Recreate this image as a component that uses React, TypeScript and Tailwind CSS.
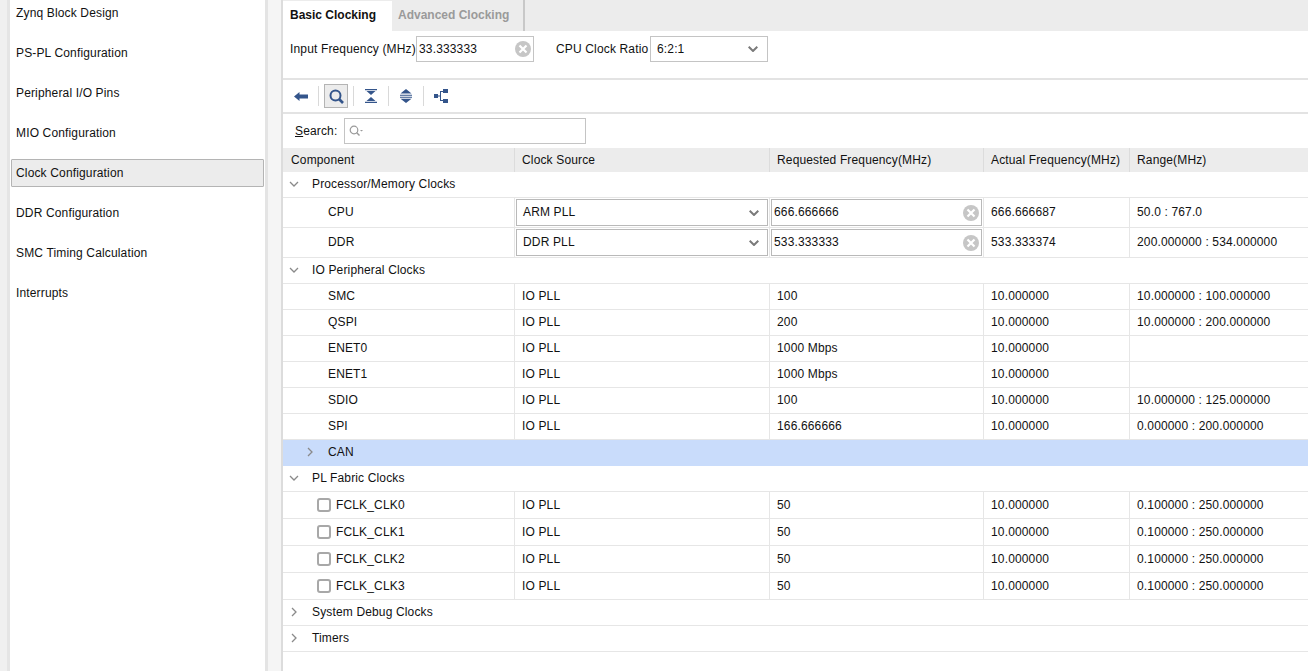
import React from "react";

const Chevron = ({ open }: { open: boolean }) => (
  <svg width="10" height="10" viewBox="0 0 10 10" className="shrink-0">
    {open ? (
      <path d="M1 3 L5 7 L9 3" fill="none" stroke="#8a8a8a" strokeWidth="1.3" />
    ) : (
      <path d="M3 1 L7 5 L3 9" fill="none" stroke="#8a8a8a" strokeWidth="1.3" />
    )}
  </svg>
);

const ClearIcon = () => (
  <svg width="16" height="16" viewBox="0 0 16 16" className="shrink-0">
    <circle cx="8" cy="8" r="8" fill="#c6c6c6" />
    <path d="M4.5 4.5 L11.5 11.5 M11.5 4.5 L4.5 11.5" stroke="#fff" strokeWidth="2.2" />
  </svg>
);

const DropArrow = () => (
  <svg width="10" height="6" viewBox="0 0 10 6" className="shrink-0">
    <path d="M0.7 0.7 L5 5 L9.3 0.7" fill="none" stroke="#7a7a7a" strokeWidth="2" />
  </svg>
);

const nav = [
  "Zynq Block Design",
  "PS-PL Configuration",
  "Peripheral I/O Pins",
  "MIO Configuration",
  "Clock Configuration",
  "DDR Configuration",
  "SMC Timing Calculation",
  "Interrupts",
];

const Group = ({ label, open }: { label: string; open: boolean }) => (
  <div className="flex h-[26px] items-center border-b border-[#e6e6e6] pb-[2px] pl-[6px]">
    <Chevron open={open} />
    <span className="ml-[13px]">{label}</span>
  </div>
);

const Cell = ({ w, children, last, lift }: { w: string; children?: React.ReactNode; last?: boolean; lift?: boolean }) => (
  <div className={`${w} flex h-full shrink-0 items-center ${last ? "" : "border-r border-[#e6e6e6]"} ${lift ? "pb-[2px]" : ""} pl-[7px]`}>
    {children}
  </div>
);

const Row = ({ name, src, req, act, range, check }: { name: string; src: string; req: string; act: string; range: string; check?: boolean }) => (
  <div className={`flex ${check ? "h-[27px]" : "h-[26px]"} items-center border-b border-[#e6e6e6]`}>
    <div className={`flex h-full w-[232px] shrink-0 items-center border-r border-[#e6e6e6] ${check ? "" : "pb-[2px]"}`}>
      {check ? (
        <>
          <span className="ml-[34px] mr-[5px] h-[14px] w-[14px] rounded-[3px] border-2 border-[#a8a8a8] bg-white" />
          <span>{name}</span>
        </>
      ) : (
        <span className="ml-[45px]">{name}</span>
      )}
    </div>
    <Cell w="w-[255px]" lift={!check}>{src}</Cell>
    <Cell w="w-[214px]" lift={!check}>{req}</Cell>
    <Cell w="w-[146px]" lift={!check}>{act}</Cell>
    <Cell w="flex-1" last lift={!check}>{range}</Cell>
  </div>
);

const EditRow = ({ name, src, req, act, range }: { name: string; src: string; req: string; act: string; range: string }) => (
  <div className="flex h-[30px] items-center border-b border-[#e6e6e6]">
    <div className="flex h-full w-[232px] shrink-0 items-center border-r border-[#e6e6e6] pb-[2px]">
      <span className="ml-[45px]">{name}</span>
    </div>
    <div className="flex h-full w-[255px] shrink-0 items-center border-r border-[#e6e6e6] px-[1px]">
      <div className="flex h-[27px] w-full items-center justify-between border border-[#b9b9b9] bg-white pl-[6px] pr-[8px]">
        <span className="mb-[2px]">{src}</span>
        <DropArrow />
      </div>
    </div>
    <div className="flex h-full w-[214px] shrink-0 items-center border-r border-[#e6e6e6] px-[1px]">
      <div className="flex h-[27px] w-full items-center justify-between border border-[#b9b9b9] bg-white px-[2px]">
        <span className="mb-[2px]">{req}</span>
        <ClearIcon />
      </div>
    </div>
    <Cell w="w-[146px]" lift>{act}</Cell>
    <Cell w="flex-1" last lift>{range}</Cell>
  </div>
);

const Sep = () => <div className="h-[20px] w-px shrink-0 bg-[#d9d9d9]" />;

export default function App() {
  return (
    <div className="flex h-[671px] w-[1308px] overflow-hidden bg-[#f0f0f0] text-[12px] tracking-[0.15px] text-[#111111]" style={{ fontFamily: '"Liberation Sans", Arial, sans-serif' }}>
      <div className="ml-[7px] h-full w-[3px] shrink-0 bg-[#e5e5e5]" />
      <aside className="h-full w-[255px] shrink-0 bg-white px-[1px]">
        <div className="-mt-[1px] flex flex-col gap-[12px]">
          {nav.map((n) => (
            <div
              key={n}
              className={`flex h-[28px] items-center rounded-[1px] border pl-[4px] ${
                n === "Clock Configuration" ? "border-[#b4b4b4] bg-[#ececec]" : "border-transparent"
              }`}
            >
              {n}
            </div>
          ))}
        </div>
      </aside>
      <div className="h-full w-[3px] shrink-0 bg-[#e4e4e4]" />
      <div className="h-full w-[13px] shrink-0 bg-[#f5f5f5]" />
      <div className="h-full w-[2px] shrink-0 bg-[#dcdcdc]" />
      <main className="flex h-full flex-1 flex-col bg-white">
        <div className="flex h-[31px] bg-[#ececec] tracking-normal">
          <div className="mt-[1px] flex w-[109px] items-center bg-white pb-[2px] pl-[7px] font-bold">Basic Clocking</div>
          <div className="flex w-[133px] items-center border-r-2 border-[#c8c8c8] pb-[1px] pl-[6px] font-bold text-[#9a9a9a]">Advanced Clocking</div>
        </div>
        <div className="flex h-[49px] border-b-2 border-[#e3e3e3] pt-[5px]">
          <div className="flex h-[26px] items-center pl-[7px]">
            <span className="w-[126px]">Input Frequency (MHz)</span>
            <div className="flex h-[26px] w-[118px] items-center justify-between border border-[#c4c4c4] px-[2px]">
              <span>33.333333</span>
              <ClearIcon />
            </div>
            <span className="ml-[22px] w-[94px]">CPU Clock Ratio</span>
            <div className="flex h-[26px] w-[118px] items-center justify-between border border-[#c4c4c4] pl-[6px] pr-[9px]">
              <span>6:2:1</span>
              <DropArrow />
            </div>
          </div>
        </div>
        <div className="flex h-[34px] items-center border-b-2 border-[#e3e3e3] pl-[11px]">
          <svg width="14" height="9" viewBox="0 0 14 9" className="shrink-0"><path d="M0 4.5 L5.5 0 V2.5 H14 V6.5 H5.5 V9 Z" fill="#34558b" /></svg>
          <div className="ml-[10px]"><Sep /></div>
          <div className="ml-[5px] flex h-[24px] w-[24px] shrink-0 items-center justify-center border border-[#b4b4b4] bg-[#ececec]">
            <svg width="15" height="15" viewBox="0 0 15 15"><circle cx="6.5" cy="6.5" r="5" fill="none" stroke="#34558b" strokeWidth="2" /><path d="M10 10 L14 14" stroke="#34558b" strokeWidth="2.6" /></svg>
          </div>
          <div className="ml-[5px]"><Sep /></div>
          <svg width="12" height="14" viewBox="0 0 12 14" className="ml-[11px] shrink-0"><path d="M0 0 H12 V1.3 H0 Z M1.5 2 H10.5 L6 6 Z M1.5 12 H10.5 L6 8 Z M0 12.7 H12 V14 H0 Z" fill="#34558b" /></svg>
          <div className="ml-[11px]"><Sep /></div>
          <svg width="12" height="14" viewBox="0 0 12 14" className="ml-[11px] shrink-0"><path d="M6 0 L11.5 4.5 H0.5 Z M0 5.7 H12 V6.7 H0 Z M0 7.7 H12 V8.7 H0 Z M0.5 9.8 H11.5 L6 14 Z" fill="#34558b" /></svg>
          <div className="ml-[11px]"><Sep /></div>
          <svg width="14" height="14" viewBox="0 0 14 14" className="ml-[10px] shrink-0"><path d="M0 5 H4 V9 H0 Z M9 0 H14 V4 H9 Z M9 10 H14 V14 H9 Z" fill="#34558b" /><path d="M4 7 H6.5 M6.5 2 V12 M6.5 2.5 H9 M6.5 11.5 H9" fill="none" stroke="#34558b" /></svg>
        </div>
        <div className="flex h-[34px] items-center pl-[12px]">
          <span className="w-[49px]"><span className="underline">S</span>earch:</span>
          <div className="flex h-[26px] w-[242px] items-center border border-[#c4c4c4] pl-[4px]">
            <svg width="15" height="12" viewBox="0 0 15 12"><circle cx="5" cy="5" r="3.8" fill="none" stroke="#9a9a9a" strokeWidth="1.2" /><path d="M7.5 7.5 L10.5 10.5" stroke="#9a9a9a" strokeWidth="1.4" /><path d="M11 5 H14 L12.5 6.5 Z" fill="#9a9a9a" /></svg>
          </div>
        </div>
        <div className="flex h-[24px] items-center bg-[#ececec]">
          <div className="flex h-full w-[232px] shrink-0 items-center border-r border-[#dcdcdc] pl-[8px]">Component</div>
          <div className="flex h-full w-[255px] shrink-0 items-center border-r border-[#dcdcdc] pl-[7px]">Clock Source</div>
          <div className="flex h-full w-[214px] shrink-0 items-center border-r border-[#dcdcdc] pl-[7px]">Requested Frequency(MHz)</div>
          <div className="flex h-full w-[146px] shrink-0 items-center border-r border-[#dcdcdc] pl-[7px]">Actual Frequency(MHz)</div>
          <div className="flex h-full flex-1 items-center pl-[7px]">Range(MHz)</div>
        </div>
        <Group label="Processor/Memory Clocks" open />
        <EditRow name="CPU" src="ARM PLL" req="666.666666" act="666.666687" range="50.0 : 767.0" />
        <EditRow name="DDR" src="DDR PLL" req="533.333333" act="533.333374" range="200.000000 : 534.000000" />
        <Group label="IO Peripheral Clocks" open />
        <Row name="SMC" src="IO PLL" req="100" act="10.000000" range="10.000000 : 100.000000" />
        <Row name="QSPI" src="IO PLL" req="200" act="10.000000" range="10.000000 : 200.000000" />
        <Row name="ENET0" src="IO PLL" req="1000 Mbps" act="10.000000" range="" />
        <Row name="ENET1" src="IO PLL" req="1000 Mbps" act="10.000000" range="" />
        <Row name="SDIO" src="IO PLL" req="100" act="10.000000" range="10.000000 : 125.000000" />
        <Row name="SPI" src="IO PLL" req="166.666666" act="10.000000" range="0.000000 : 200.000000" />
        <div className="flex h-[26px] items-center bg-[#c9dcfb] pb-[2px] pl-[22px]">
          <Chevron open={false} />
          <span className="ml-[13px]">CAN</span>
        </div>
        <Group label="PL Fabric Clocks" open />
        <Row check name="FCLK_CLK0" src="IO PLL" req="50" act="10.000000" range="0.100000 : 250.000000" />
        <Row check name="FCLK_CLK1" src="IO PLL" req="50" act="10.000000" range="0.100000 : 250.000000" />
        <Row check name="FCLK_CLK2" src="IO PLL" req="50" act="10.000000" range="0.100000 : 250.000000" />
        <Row check name="FCLK_CLK3" src="IO PLL" req="50" act="10.000000" range="0.100000 : 250.000000" />
        <Group label="System Debug Clocks" open={false} />
        <Group label="Timers" open={false} />
      </main>
    </div>
  );
}
